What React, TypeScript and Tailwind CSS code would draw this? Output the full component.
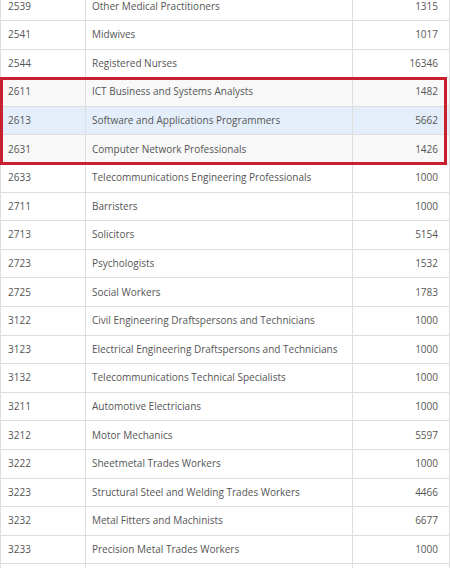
import React from "react";

type Row = [string, string, string];

const before: Row[] = [
  ["2539", "Other Medical Practitioners", "1315"],
  ["2541", "Midwives", "1017"],
  ["2544", "Registered Nurses", "16346"],
];

const ict: Row[] = [
  ["2611", "ICT Business and Systems Analysts", "1482"],
  ["2613", "Software and Applications Programmers", "5662"],
  ["2631", "Computer Network Professionals", "1426"],
];

const after: Row[] = [
  ["2633", "Telecommunications Engineering Professionals", "1000"],
  ["2711", "Barristers", "1000"],
  ["2713", "Solicitors", "5154"],
  ["2723", "Psychologists", "1532"],
  ["2725", "Social Workers", "1783"],
  ["3122", "Civil Engineering Draftspersons and Technicians", "1000"],
  ["3123", "Electrical Engineering Draftspersons and Technicians", "1000"],
  ["3132", "Telecommunications Technical Specialists", "1000"],
  ["3211", "Automotive Electricians", "1000"],
  ["3212", "Motor Mechanics", "5597"],
  ["3222", "Sheetmetal Trades Workers", "1000"],
  ["3223", "Structural Steel and Welding Trades Workers", "4466"],
  ["3232", "Metal Fitters and Machinists", "6677"],
  ["3233", "Precision Metal Trades Workers", "1000"],
  // next row only shows its top edge in the crop
  ["", "", ""],
];

function TableRow({ row, tone }: { row: Row; tone?: "blue" | "gray" }) {
  const bg = tone === "blue" ? "bg-[#e4eefa]" : tone === "gray" ? "bg-[#f8f8f8]" : "bg-white";
  return (
    <div className={`flex h-[28.6px] items-center border-b border-[#dedede] ${bg}`}>
      <div className="flex h-full w-[85px] shrink-0 items-center border-r border-[#dedede] pl-[7px]">{row[0]}</div>
      <div className="flex h-full w-[267px] shrink-0 items-center whitespace-nowrap border-r border-[#dedede] pl-[6px]">
        {row[1]}
      </div>
      <div className="flex h-full flex-1 items-center justify-end pr-[11px]">{row[2]}</div>
    </div>
  );
}

export default function App() {
  return (
    <div className="h-[568px] w-[450px] overflow-hidden bg-white">
      <div
        className="-mt-[7.6px] border-x border-[#dedede] text-[10px] text-[#555]"
        style={{ fontFamily: '"Open Sans", "Liberation Sans", sans-serif' }}
      >
        {before.map((r, i) => (
          <TableRow key={i} row={r} />
        ))}
        <div className="relative">
          <TableRow row={ict[0]} tone="gray" />
          <TableRow row={ict[1]} tone="blue" />
          <TableRow row={ict[2]} tone="gray" />
          {/* red highlight frame */}
          <div className="pointer-events-none absolute -top-[1.5px] -left-[1px] right-[2px] bottom-[-1px] border-[3px] border-[#c9202f]" />
        </div>
        {after.map((r, i) => (
          <TableRow key={i} row={r} />
        ))}
      </div>
    </div>
  );
}
